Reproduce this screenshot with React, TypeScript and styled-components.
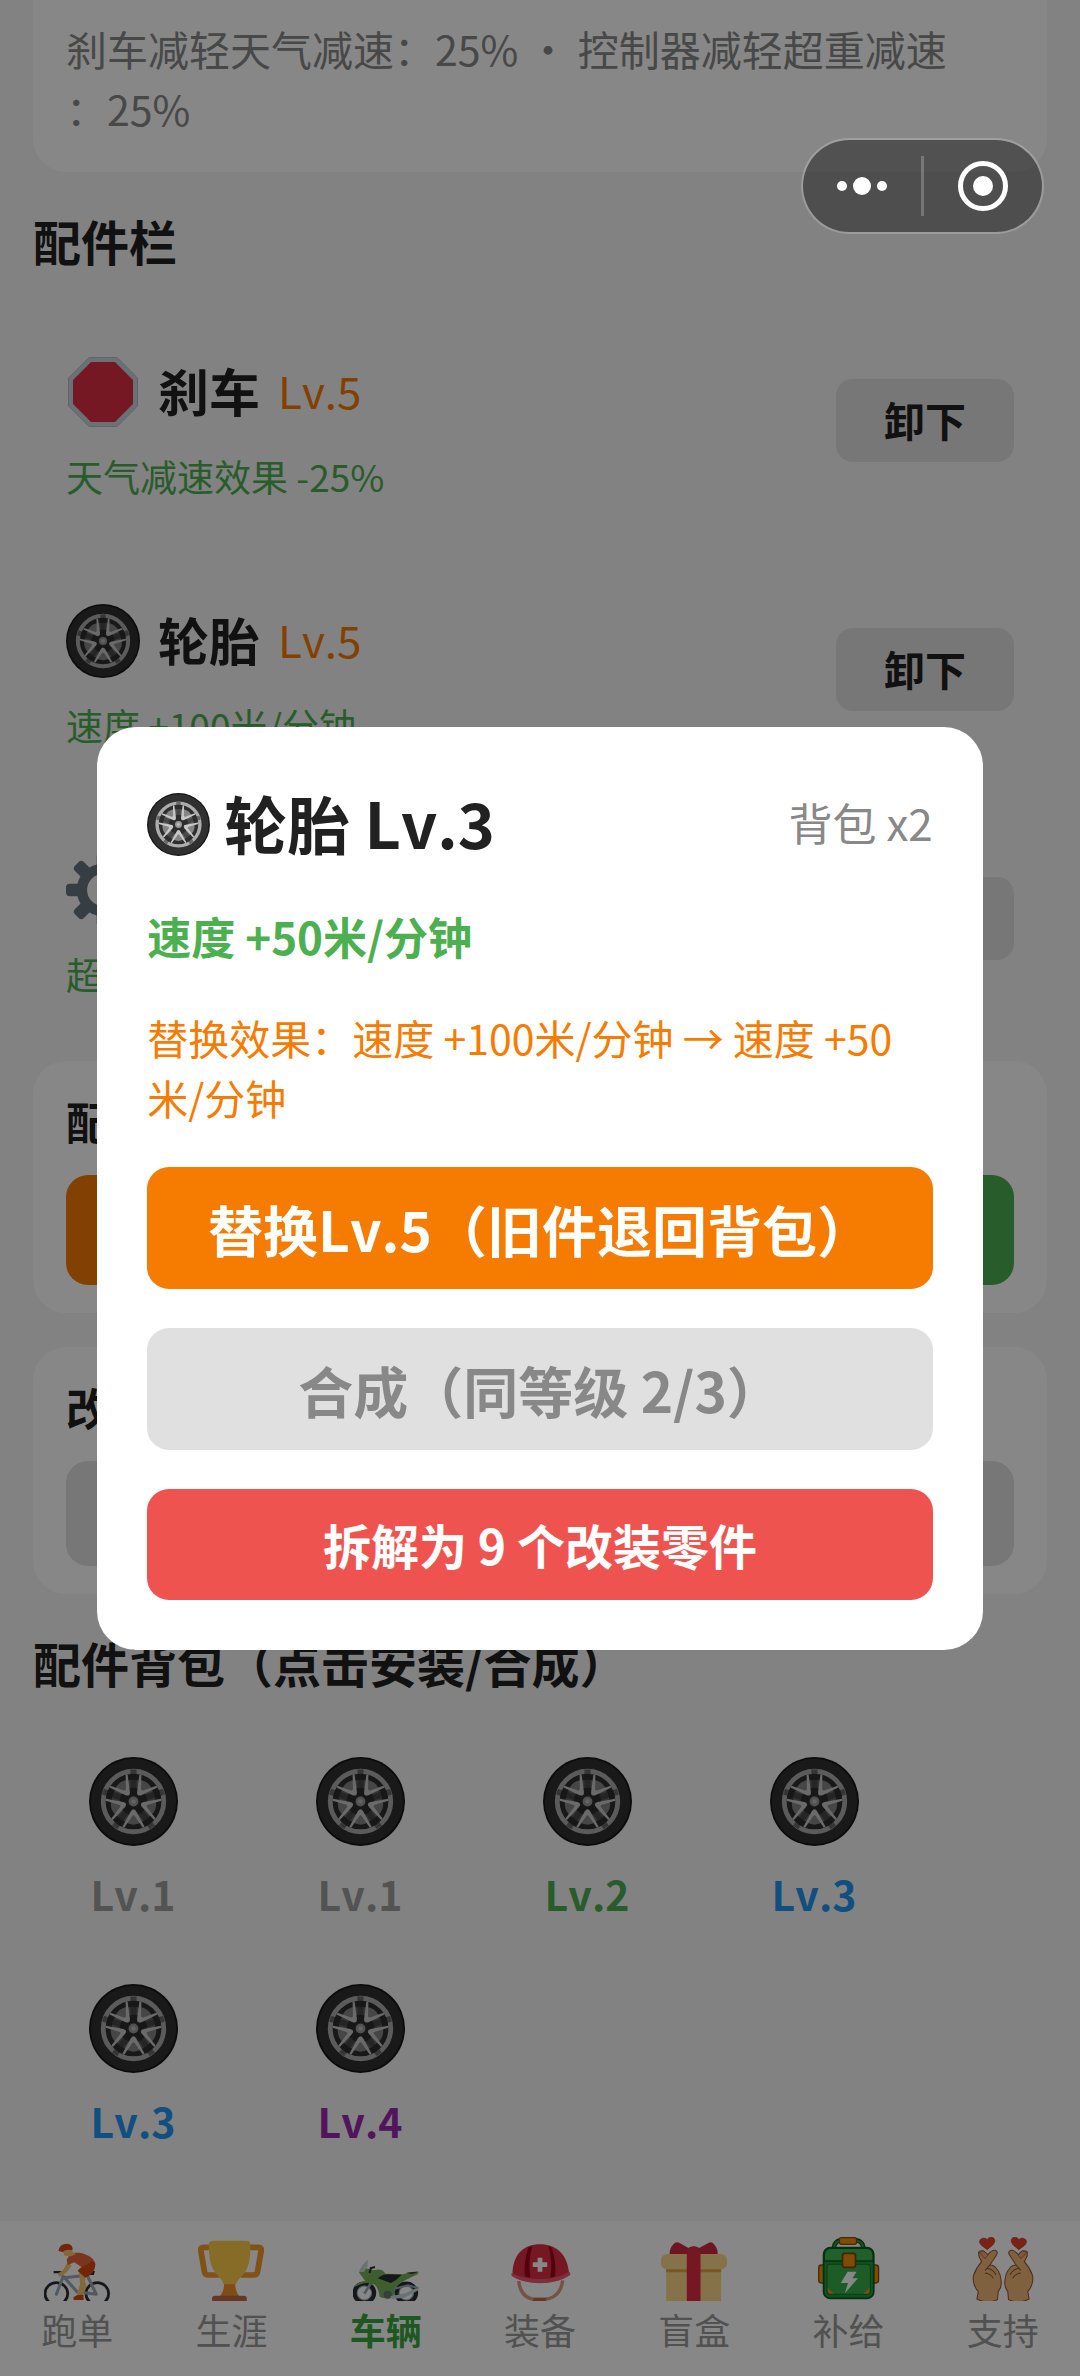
import React from 'react';
import styled, { createGlobalStyle } from 'styled-components';

const GlobalStyle = createGlobalStyle`
  * { box-sizing: border-box; }
  body {
    margin: 0;
    background: #f5f5f5;
    color: #212121;
    font-family: "Noto Sans CJK SC", "Noto Sans", sans-serif;
    font-kerning: none;
  }
  h2, h3, p, ul { margin: 0; padding: 0; }
  ul { list-style: none; }
  button { font-family: inherit; font-kerning: inherit; border: 0; padding: 0; cursor: pointer; color: inherit; }
`;

const levelColors: Record<number, string> = {
  1: '#9e9e9e',
  2: '#4caf50',
  3: '#2196f3',
  4: '#9c27b0',
  5: '#f57c00',
};

const Page = styled.main`
  min-height: 100vh;
  padding: 0 33px 216px;
`;

const Card = styled.section`
  background: #fff;
  border-radius: 33px;
  padding: 30px 33px 28px;
  & + & { margin-top: 34px; }
`;

const StatsCard = styled(Card)`
  border-radius: 0 0 33px 33px;
  padding: 18px 72px 34px 33px;
`;

const StatsText = styled.p`
  font-size: 41px;
  line-height: 60px;
  color: #888;
  word-break: break-all;
  line-break: anywhere;
`;

const SectionTitle = styled.h2`
  font-size: 48px;
  line-height: 72px;
  margin: 32px 0 20px;
`;

const CardTitle = styled.h3`
  font-size: 44px;
  line-height: 60px;
  margin-bottom: 24px;
`;

const SlotList = styled.ul`
  margin-bottom: 18px;
`;

const Slot = styled.li`
  display: flex;
  align-items: center;
  justify-content: space-between;
  padding: 42px 33px 43px;
`;

const SlotHead = styled.div`
  display: flex;
  align-items: center;
  gap: 18px;
  line-height: 104px;
  svg { margin-top: 4px; }
`;

const SlotName = styled.strong`
  font-size: 51px;
`;

const SlotLevel = styled.span<{ $level: number }>`
  font-size: 44px;
  color: ${p => levelColors[p.$level]};
`;

const SlotEffect = styled.p`
  margin-top: 8px;
  font-size: 37px;
  line-height: 52px;
  color: #4caf50;
`;

const UnloadButton = styled.button`
  width: 178px;
  height: 83px;
  padding-bottom: 2px;
  border-radius: 17px;
  background: #e0e0e0;
  font-size: 41px;
  font-weight: 700;
`;

const ActionRow = styled.div`
  display: flex;
  gap: 28px;
`;

const CardButton = styled.button<{ $bg: string; $height: number }>`
  flex: 1;
  height: ${p => p.$height}px;
  border-radius: 22px;
  background: ${p => p.$bg};
`;

const BagGrid = styled.ul`
  display: grid;
  grid-template-columns: repeat(auto-fill, 200px);
  gap: 27px;
  margin-top: 35px;
`;

const BagItem = styled.button<{ $level: number }>`
  display: flex;
  flex-direction: column;
  align-items: center;
  gap: 22px;
  width: 100%;
  height: 200px;
  padding-top: 24px;
  background: transparent;
  color: ${p => levelColors[p.$level]};
  font-size: 41px;
  line-height: 50px;
  font-weight: 700;
`;

const TabBar = styled.nav`
  position: fixed;
  left: 0;
  right: 0;
  bottom: 0;
  display: flex;
  background: #fff;
`;

const Tab = styled.a<{ $active?: boolean }>`
  flex: 1;
  display: flex;
  flex-direction: column;
  align-items: center;
  gap: 4px;
  padding: 16px 0 23px;
  text-decoration: none;
  font-size: 36px;
  line-height: 48px;
  color: ${p => (p.$active ? '#3aa63f' : '#999')};
  font-weight: ${p => (p.$active ? 700 : 400)};
`;

const Mask = styled.div`
  position: fixed;
  inset: 0;
  z-index: 10;
  display: flex;
  align-items: center;
  justify-content: center;
  background: rgba(0, 0, 0, 0.47);
`;

const Dialog = styled.div`
  width: 82%;
  padding: 50px;
  border-radius: 39px;
  background: #fff;
`;

const DialogHead = styled.header`
  display: flex;
  align-items: center;
  justify-content: space-between;
  line-height: 90px;
`;

const DialogTitle = styled.h2`
  display: flex;
  align-items: center;
  gap: 14px;
  font-size: 63px;
  svg { margin-top: 6px; }
`;

const DialogCount = styled.span`
  font-size: 44px;
  color: #888;
`;

const DialogEffect = styled.p`
  margin-top: 36px;
  font-size: 44px;
  line-height: 66px;
  font-weight: 700;
  color: #4caf50;
`;

const DialogNote = styled.p`
  margin: 38px 0 40px;
  font-size: 41px;
  line-height: 60px;
  color: #f57c00;
  word-break: break-all;
`;

const DialogActions = styled.div`
  display: grid;
  gap: 39px;
`;

const DialogButton = styled.button<{ $bg: string; $color?: string; $compact?: boolean }>`
  height: ${p => (p.$compact ? 111 : 122)}px;
  border-radius: 22px;
  background: ${p => p.$bg};
  color: ${p => p.$color ?? '#fff'};
  font-size: ${p => (p.$compact ? 48 : 55)}px;
  font-weight: 700;
`;

const Capsule = styled.div`
  position: fixed;
  top: 138px;
  right: 36px;
  z-index: 20;
  display: flex;
  align-items: center;
  width: 243px;
  height: 96px;
  border: 2px solid rgba(255, 255, 255, 0.2);
  border-radius: 48px;
  background: rgba(0, 0, 0, 0.4);
  background-clip: padding-box;
`;

const CapsuleButton = styled.button`
  flex: 1;
  height: 100%;
  display: grid;
  place-items: center;
  background: transparent;
`;

const CapsuleDivider = styled.span`
  width: 3px;
  height: 60px;
  background: rgba(255, 255, 255, 0.22);
`;

const Wheel = ({ size }: { size: number }) => (
  <svg width={size} height={size} viewBox="0 0 100 100" aria-hidden="true">
    <circle cx="50" cy="50" r="50" fill="#151515" />
    <circle cx="50" cy="50" r="48" fill="#303030" />
    <circle cx="50" cy="50" r="34" fill="#2e2e2e" stroke="#adadad" strokeWidth="5.4" />
    <circle cx="50" cy="50" r="20" fill="none" stroke="#666" strokeWidth="9" />
    {[0, 72, 144, 216, 288].map(a => (
      <g key={a} transform={`rotate(${a} 50 50)`}>
        <path d="M46.500 14 H53.500 V44 H46.500 Z" fill="#2e2e2e" opacity="0.550" />
        <path d="M48 62 Q50 59 52 62 L58 74 Q50 78 42 74 Z" fill="#858585" />
        <path d="M37.500 78.500 L47 61 Q50 56.500 53 61 L62.500 78.500 L60.500 79.500 L51.500 66.500 Q50 64.500 48.500 66.500 L39.500 79.500 Z" fill="#c8c8c8" />
      </g>
    ))}
    <circle cx="50" cy="50" r="8.500" fill="#2e2e2e" />
    <circle cx="50" cy="50" r="5.500" fill="#999" />
    <circle cx="50" cy="50" r="2.500" fill="#bbb" />
  </svg>
);

const StopSign = ({ size }: { size: number }) => (
  <svg width={size} height={size} viewBox="0 0 74 74" aria-hidden="true">
    <path d="M23 2.500 H51 L71.500 23 V51 L51 71.500 H23 L2.500 51 V23 Z" fill="#ccd6dd" stroke="#a8c4cc" strokeWidth="1" />
    <path d="M25 7 H49 L67 25 V49 L49 67 H25 L7 49 V25 Z" fill="#dd2e44" />
  </svg>
);

const Gear = ({ size }: { size: number }) => (
  <svg width={size} height={size} viewBox="0 0 100 100" aria-hidden="true">
    <g fill="#66757f">
      {[0, 45, 90, 135, 180, 225, 270, 315].map(a => (
        <rect key={a} x="41.500" y="0" width="17" height="26" rx="5" transform={`rotate(${a} 50 50)`} />
      ))}
    </g>
    <circle cx="50" cy="50" r="28.500" fill="none" stroke="#66757f" strokeWidth="14" />
  </svg>
);

const partIcons = { brake: StopSign, tire: Wheel, controller: Gear };

const TabIcon = ({ children }: { children: React.ReactNode }) => (
  <svg width="66" height="64" viewBox="0 0 192 192" preserveAspectRatio="none" aria-hidden="true">{children}</svg>
);

const CyclistIcon = () => (
  <TabIcon>
    <circle cx="36" cy="170" r="33" fill="none" stroke="#292f33" strokeWidth="8" />
    <circle cx="155" cy="170" r="33" fill="none" stroke="#292f33" strokeWidth="8" />
    <g fill="none" stroke="#99aab5" strokeWidth="9" strokeLinejoin="round" strokeLinecap="round">
      <path d="M36 172 L56 118 L96 164 L152 172 L126 116" />
      <path d="M58 122 L112 116" />
    </g>
    <path d="M28 102 H54 V110 L46 118 L42 109 H28 Z" fill="#292f33" />
    <path d="M132 114 L136 102 H148 L145 114 Z" fill="#292f33" />
    <path d="M68 76 L80 86 L66 106 L46 120 L39 110 L56 99 Z" fill="#f7c46c" />
    <path d="M102 108 L124 106 L119 134 L124 146 L112 178 L94 176 L105 142 Z" fill="#f7c46c" />
    <path d="M86 180 Q98 172 115 174 V189 H86 Z" fill="#d9480f" />
    <path d="M70 84 L66 70 C74 44 96 46 108 48 C130 54 150 66 149 84 L118 96 L88 76 Z" fill="#e8633a" />
    <path d="M98 102 C104 88 128 86 138 72 L149 78 C150 98 142 114 120 122 Z" fill="#d9480f" />
    <path d="M52 38 L76 34 L84 44 L92 52 L80 58 L60 56 Z" fill="#f7c46c" />
    <path d="M42 42 Q45 20 67 20 Q84 20 83 40 Q66 34 54 45 Z" fill="#dd4317" />
  </TabIcon>
);

const TrophyIcon = () => (
  <TabIcon>
    <g fill="none" stroke="#f49b2a" strokeWidth="17" strokeLinejoin="round">
      <path d="M46 31 H16 Q7 31 8 40 L19 105 Q21 114 30 114 H62" />
      <path d="M138 31 H176 Q185 31 184 40 L173 105 Q171 114 162 114 H124" />
    </g>
    <path d="M76 132 H108 Q106 160 120 178 H64 Q78 160 76 132 Z" fill="#f19020" />
    <path d="M32 17 Q38 10 46 11 H138 Q148 10 152 17 C154 60 148 98 128 116 Q116 126 110 142 H75 Q70 126 58 116 C38 98 30 60 32 17 Z" fill="#ffcc4d" />
    <path d="M41 192 V184 Q41 176 50 176 H134 Q142 176 142 184 V192 Z" fill="#c1694f" />
  </TabIcon>
);

const MotorcycleIcon = () => (
  <TabIcon>
    <g fill="none" stroke="#292f33" strokeWidth="13">
      <circle cx="33" cy="168" r="28" />
      <circle cx="155" cy="168" r="28" />
    </g>
    <circle cx="33" cy="168" r="21" fill="none" stroke="#99aab5" strokeWidth="3" />
    <circle cx="155" cy="168" r="21" fill="none" stroke="#99aab5" strokeWidth="3" />
    <path d="M33 170 L56 132" stroke="#99aab5" strokeWidth="8" />
    <path d="M0 152 Q12 134 36 133 L17 106 L38 94 L60 100 Q84 92 94 110 L146 112 Q170 102 191 104 L188 112 Q158 126 142 136 Q118 146 118 178 Q98 188 78 180 Q72 140 54 140 Q34 132 0 152 Z" fill="#77b255" />
    <path d="M17 104 Q24 84 43 68 L42 88 L32 105 Z" fill="#ccd6dd" />
    <path d="M72 124 Q88 110 104 112 L142 113 L124 130 L110 138 Z M155 107 L190 104 L172 111 Z" fill="#292f33" />
    <path d="M48 108 L52 93 L64 90" fill="none" stroke="#292f33" strokeWidth="6" />
    <circle cx="101" cy="173" r="12" fill="#66757f" />
    <path d="M108 178 L152 169 L190 150 V160 L150 182 L112 186 Z" fill="#ccd6dd" />
    <path d="M120 155 L160 145 L190 153" fill="none" stroke="#99aab5" strokeWidth="6" />
  </TabIcon>
);

const HelmetIcon = () => (
  <TabIcon>
    <path d="M34 132 Q40 184 82 187 H112 Q156 180 162 130" fill="none" stroke="#d99e82" strokeWidth="10" />
    <path d="M74 192 L78 182 H116 L112 192 Z" fill="#c1694f" />
    <path d="M16 110 C18 50 50 22 96 22 C142 22 174 50 180 104 L184 112 Q150 136 96 136 Q42 136 14 116 Z" fill="#dd2e44" />
    <path d="M62 32 Q48 70 52 118 L68 122 Q60 70 74 28 Z M130 32 Q144 70 140 118 L126 122 Q134 70 120 28 Z" fill="#a0041e" />
    <path d="M12 108 Q50 126 96 126 Q146 126 180 104 Q188 110 181 116 Q148 138 96 139 Q44 138 14 117 Z" fill="#ea596e" />
    <path d="M89 62 H103 V76 H117 V90 H103 V104 H89 V90 H75 V76 H89 Z" fill="#fff" />
  </TabIcon>
);

const GiftIcon = () => (
  <TabIcon>
    <path d="M15 90 H175 V192 H15 Z" fill="#fdd888" />
    <path d="M15 95 H175 V106 H15 Z" fill="#e6a346" />
    <rect x="0" y="51" width="192" height="46" rx="18" fill="#fdd888" />
    <path d="M25 51 Q24 36 36 22 Q44 12 54 18 L80 33 Q95 24 111 33 L138 18 Q148 12 154 22 Q166 36 165 51 Z" fill="#cf2942" />
    <path d="M75 50 Q75 28 95 28 Q115 28 115 50 V192 H75 Z" fill="#dd2e44" />
  </TabIcon>
);

const SupplyIcon = () => (
  <TabIcon>
    <path d="M52 36 Q52 8 84 8 H104 Q138 8 138 36" fill="none" stroke="#0a5a20" strokeWidth="13" />
    <path d="M52 36 Q52 9 84 9 H104 Q138 9 138 36" fill="none" stroke="#34a048" strokeWidth="5" />
    <g stroke="#8a4c0c" strokeWidth="4" fill="#f09010">
      <rect x="68" y="2" width="50" height="20" rx="6" />
      <rect x="8" y="84" width="24" height="54" rx="8" />
      <rect x="158" y="84" width="24" height="54" rx="8" />
    </g>
    <rect x="22" y="32" width="146" height="152" rx="20" fill="#1e9a3c" stroke="#0a5a20" strokeWidth="5" />
    <path d="M24 72 V52 Q26 34 44 34 H146 Q164 34 166 52 V72 Z" fill="#3cb84e" stroke="#0a5a20" strokeWidth="4" />
    <rect x="32" y="82" width="126" height="90" rx="10" fill="#36b04a" stroke="#14702c" strokeWidth="3" />
    <path d="M34 152 L52 170 H40 Q34 168 34 162 Z M156 152 L138 170 H150 Q156 168 156 162 Z" fill="#f09010" />
    <rect x="77" y="49" width="38" height="42" rx="7" fill="#f09010" stroke="#7a440c" strokeWidth="5" />
    <path d="M92 104 H118 L106 124 H122 L84 169 L93 138 H72 Z" fill="#fff" />
  </TabIcon>
);

const HeartHand = () => (
  <g>
    <path d="M50 38 C42 30 29 26 28 14 C28 4 42 0 50 8 C56 -3 72 0 72 11 C71 24 58 30 50 38 Z" fill="#e8412c" stroke="#a82c20" strokeWidth="2" />
    <path d="M25 46 Q28 40 40 42 L52 53 Q64 38 73 40 Q83 44 77 54 L58 84 Q70 84 78 96 Q88 108 90 128 Q94 148 82 164 L80 188 Q50 202 20 186 L24 164 Q6 142 10 116 Q18 92 34 74 L26 58 Z" fill="#f2b878" stroke="#925630" strokeWidth="3" />
    <path d="M26 46 L44 65 L52 54 L40 42 Z" fill="#f4a27e" stroke="#925630" strokeWidth="2" />
    <path d="M58 84 L44 100 M50 94 Q66 96 76 114 M44 108 Q60 110 68 124" fill="none" stroke="#925630" strokeWidth="3" />
  </g>
);

const SupportIcon = () => (
  <TabIcon>
    <HeartHand />
    <g transform="translate(192 0) scale(-1 1)"><HeartHand /></g>
  </TabIcon>
);

const slots = [
  { name: '刹车', level: 5, effect: '天气减速效果 -25%', icon: 'brake' },
  { name: '轮胎', level: 5, effect: '速度 +100米/分钟', icon: 'tire' },
  { name: '控制器', level: 5, effect: '超重减速效果 -25%', icon: 'controller' },
] as const;

const bag = [1, 1, 2, 3, 3, 4];

const tabs = [
  { label: '跑单', Icon: CyclistIcon },
  { label: '生涯', Icon: TrophyIcon },
  { label: '车辆', Icon: MotorcycleIcon, active: true },
  { label: '装备', Icon: HelmetIcon },
  { label: '盲盒', Icon: GiftIcon },
  { label: '补给', Icon: SupplyIcon },
  { label: '支持', Icon: SupportIcon },
];

export default function App() {
  return (
    <>
      <GlobalStyle />
      <Page>
        <StatsCard>
          <StatsText>刹车减轻天气减速：25% · 控制器减轻超重减速：25%</StatsText>
        </StatsCard>

        <SectionTitle>配件栏</SectionTitle>
        <SlotList>
          {slots.map(slot => {
            const Icon = partIcons[slot.icon];
            return (
              <Slot key={slot.name}>
                <div>
                  <SlotHead>
                    <Icon size={74} />
                    <SlotName>{slot.name}</SlotName>
                    <SlotLevel $level={slot.level}>Lv.{slot.level}</SlotLevel>
                  </SlotHead>
                  <SlotEffect>{slot.effect}</SlotEffect>
                </div>
                <UnloadButton type="button">卸下</UnloadButton>
              </Slot>
            );
          })}
        </SlotList>

        <Card>
          <CardTitle>配件</CardTitle>
          <ActionRow>
            <CardButton type="button" $bg="#f57c00" $height={110} aria-label="配件" />
            <CardButton type="button" $bg="#4caf50" $height={110} aria-label="合成" />
          </ActionRow>
        </Card>
        <Card>
          <CardTitle>改装</CardTitle>
          <ActionRow>
            <CardButton type="button" $bg="#e0e0e0" $height={105} aria-label="改装" />
          </ActionRow>
        </Card>

        <SectionTitle>配件背包（点击安装/合成）</SectionTitle>
        <BagGrid>
          {bag.map((level, i) => (
            <li key={i}>
              <BagItem type="button" $level={level}>
                <Wheel size={89} />
                Lv.{level}
              </BagItem>
            </li>
          ))}
        </BagGrid>
      </Page>

      <TabBar>
        {tabs.map(({ label, Icon, active }) => (
          <Tab key={label} href="#" $active={active}>
            <Icon />
            {label}
          </Tab>
        ))}
      </TabBar>

      <Mask>
        <Dialog role="dialog" aria-modal="true" aria-labelledby="part-title">
          <DialogHead>
            <DialogTitle id="part-title">
              <Wheel size={63} />
              轮胎 Lv.3
            </DialogTitle>
            <DialogCount>背包 x2</DialogCount>
          </DialogHead>
          <DialogEffect>速度 +50米/分钟</DialogEffect>
          <DialogNote>替换效果：速度 +100米/分钟 → 速度 +50米/分钟</DialogNote>
          <DialogActions>
            <DialogButton type="button" $bg="#f57c00">替换Lv.5（旧件退回背包）</DialogButton>
            <DialogButton type="button" $bg="#e0e0e0" $color="#888" disabled>合成（同等级 2/3）</DialogButton>
            <DialogButton type="button" $bg="#ef5350" $compact>拆解为 9 个改装零件</DialogButton>
          </DialogActions>
        </Dialog>
      </Mask>

      <Capsule>
        <CapsuleButton type="button" aria-label="更多">
          <svg width="52" height="20" viewBox="0 0 52 20" fill="#fff">
            <circle cx="6" cy="10" r="5" />
            <circle cx="26" cy="10" r="9" />
            <circle cx="46" cy="10" r="5" />
          </svg>
        </CapsuleButton>
        <CapsuleDivider />
        <CapsuleButton type="button" aria-label="关闭">
          <svg width="50" height="50" viewBox="0 0 50 50">
            <circle cx="25" cy="25" r="22.500" fill="none" stroke="#fff" strokeWidth="5" />
            <circle cx="25" cy="25" r="10" fill="#fff" />
          </svg>
        </CapsuleButton>
      </Capsule>
    </>
  );
}
